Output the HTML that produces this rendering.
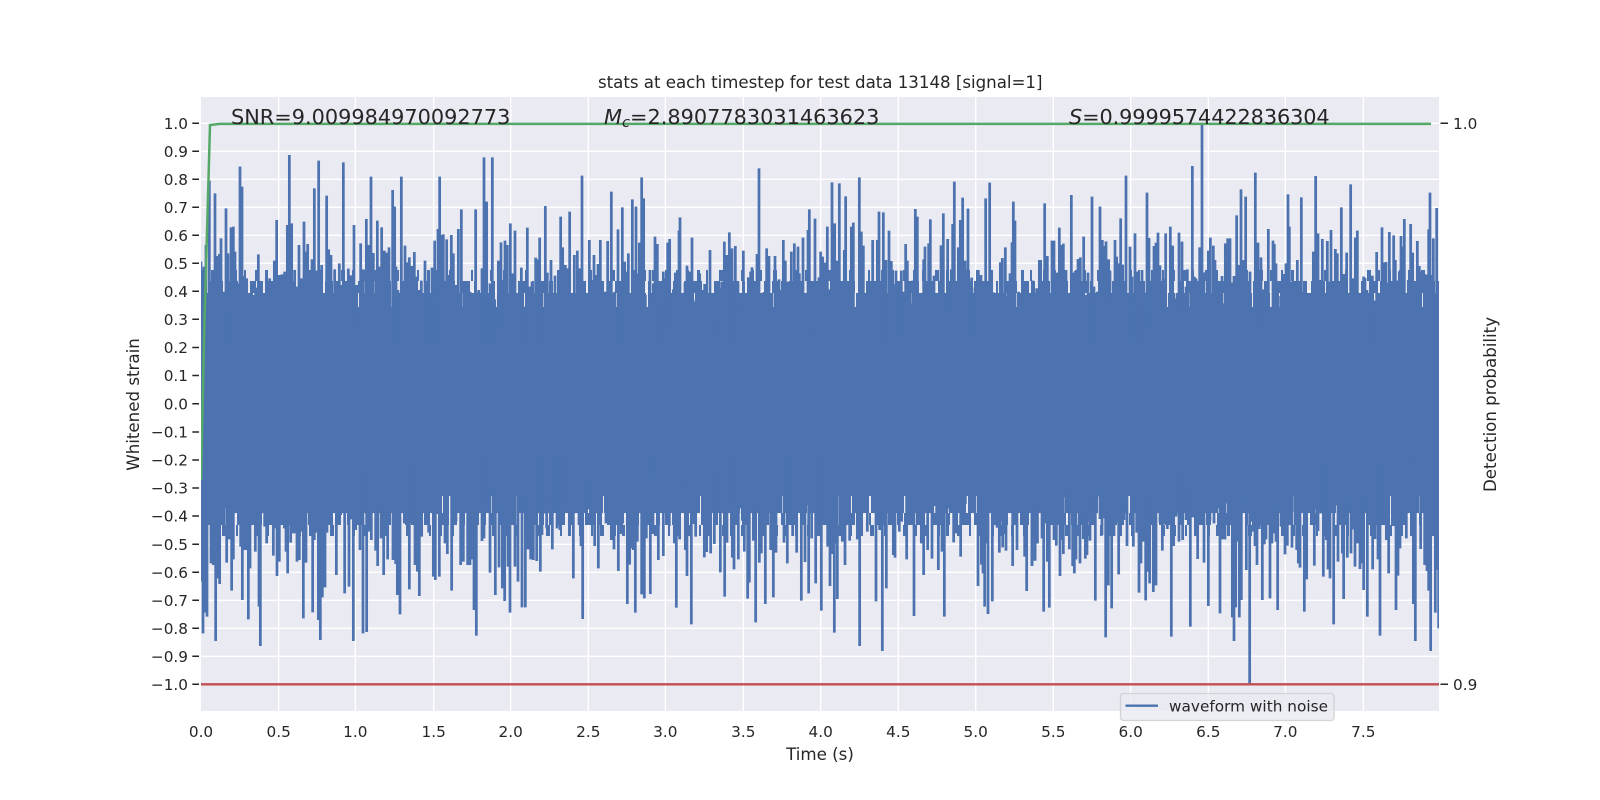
<!DOCTYPE html>
<html><head><meta charset="utf-8"><title>stats at each timestep</title>
<style>html,body{margin:0;padding:0;background:#fff}svg{display:block}text{font-family:"DejaVu Sans","Liberation Sans",sans-serif;fill:#262626}</style></head>
<body>
<svg width="1600" height="800" viewBox="0 0 1600 800" xmlns="http://www.w3.org/2000/svg">
<defs><clipPath id="ax"><rect x="201" y="97" width="1238" height="614"/></clipPath></defs>
<rect x="201" y="97" width="1238" height="614" fill="#eaeaf2"/>
<g stroke="#fff" stroke-width="1.4" fill="none">
<path d="M278.7 97V711M355.3 97V711M433.7 97V711M510.7 97V711M588.3 97V711M665.3 97V711M743.3 97V711M820.7 97V711M898.3 97V711M975.7 97V711M1053.3 97V711M1130.7 97V711M1208.3 97V711M1285.3 97V711M1363.3 97V711"/>
<path d="M201 123.3H1439M201 151.3H1439M201 179.3H1439M201 207.3H1439M201 235.3H1439M201 263.3H1439M201 291.3H1439M201 319.3H1439M201 347.5H1439M201 375.5H1439M201 403.8H1439M201 432H1439M201 460H1439M201 488H1439M201 516H1439M201 544.3H1439M201 572.3H1439M201 600.3H1439M201 628.3H1439M201 656.3H1439M201 684.3H1439"/>
</g>
<g clip-path="url(#ax)">
<rect x="201" y="307" width="1238" height="189" fill="#4c72b0"/>
<g fill="none" stroke="#4c72b0">
<path d="M201 300H1439" stroke-width="14" stroke-dasharray="11 1 17 2 7 1 13 2 23 1 8 2 15 1"/>
<path d="M201 287H1439" stroke-width="12" stroke-dasharray="4 4 8 3 3 5 10 4 2 6 6 3"/>
<path d="M201 275.5H1439" stroke-width="11" stroke-dasharray="2 8 3 6 2 11 4 7 2 9"/>
<path d="M201 504H1439" stroke-width="18" stroke-dasharray="14 1 9 2 21 1 6 2 12 1 17 2 8 1"/>
<path d="M201 519H1439" stroke-width="12" stroke-dasharray="3 4 9 3 5 6 2 4 10 3 4 5"/>
<path d="M201 530.5H1439" stroke-width="11" stroke-dasharray="3 9 2 7 4 10 2 6 3 8"/>
</g>
<g fill="none" stroke="#4c72b0" stroke-width="8.2">
<path transform="translate(200 130) scale(.33333)" d="M3 395V640M12 410V640M18 345V640M28 152V640M38 445V640M45 190V640M52 378V640M58 372V640M63 325V640M70 485V640M78 235V640M84 370V640M93 292V640M100 290V640M105 365V640M112 460V640M120 110V640M126 170V640M132 438V640M140 445V640M147 495V640M155 535V640M160 495V640M167 473V640M175 373V640M185 502V640M192 560V640M199 442V640M209 445V640M216 532V640M223 392V640M230 270V640M238 435V640M246 433V640M254 425V640M262 285V640M268 75V640M275 280V640M284 420V640M292 470V640M297 345V640M304 445V640M312 275V640M316 365V640M323 342V640M330 455V640M336 388V640M343 175V640M350 422V640M356 92V640M365 405V640M372 520V640M380 197V640M386 358V640M393 375V640M397 508V640M404 418V640M410 575V640M418 400V640M425 465V640M430 97V640M437 465V640M445 416V640M452 436V640M462 285V640M470 465V640M477 590V640M482 340V640M490 418V640M499 267V640M507 345V640M513 140V640M520 369V640M532 272V640M538 410V640M545 292V640M553 362V640M560 368V640M567 352V640M574 595V640M578 180V640M584 230V640M588 410V640M594 480V640M604 140V640M610 455V640M615 347V640M620 397V640M628 382V640M636 408V640M643 366V640M650 440V640M656 480V640M664 452V640M675 392V640M685 445V640M692 550V640M696 413V640M704 332V640M714 297V640M719 140V640M724 315V640M730 313V640M740 328V640M746 435V640M754 315V640M760 370V640M768 465V640M775 297V640M784 238V640M790 555V640M798 455V640M805 595V640M810 485V640M818 502V640M827 238V640M836 480V640M846 415V640M852 82V640M860 215V640M870 460V640M877 82V640M884 508V640M888 590V640M895 392V640M903 337V640M908 450V640M915 332V640M922 345V640M931 280V640M938 430V640M945 302V640M953 512V640M957 490V640M964 413V640M972 530V640M982 293V640M990 470V640M996 455V640M1000 490V640M1007 383V640M1014 388V640M1019 323V640M1026 465V640M1036 228V640M1042 428V640M1048 570V640M1053 390V640M1060 610V640M1065 437V640M1072 523V640M1082 260V640M1088 352V640M1096 405V640M1102 415V640M1109 245V640M1116 545V640M1123 375V640M1132 362V640M1140 415V640M1146 137V640M1152 610V640M1162 587V640M1168 330V640M1175 450V640M1182 375V640M1188 435V640M1194 402V640M1201 330V640M1209 500V640M1216 485V640M1223 333V640M1228 485V640M1234 185V640M1244 485V640M1254 298V640"/>
<path transform="translate(620 130) scale(.33333)" d="M7 232V640M14 395V640M18 425V640M25 370V640M30 515V640M37 208V640M42 445V640M48 230V640M53 430V640M58 338V640M65 142V640M71 205V640M76 495V640M80 590V640M84 610V640M90 420V640M96 530V640M100 460V640M105 320V640M112 342V640M120 508V640M130 425V640M137 445V640M143 338V640M149 327V640M155 610V640M160 478V640M166 428V640M172 460V640M177 302V640M180 262V640M188 610V640M195 458V640M201 407V640M208 425V640M216 323V640M223 515V640M228 508V640M235 442V640M239 430V640M246 480V640M254 462V640M262 492V640M270 360V640M276 555V640M281 625V640M286 470V640M294 625V640M300 475V640M305 455V640M313 335V640M320 375V640M328 307V640M336 355V640M346 348V640M354 455V640M360 510V640M365 558V640M370 362V640M377 582V640M385 442V640M392 425V640M396 412V640M403 485V640M408 625V640M411 372V640M417 115V640M424 502V640M432 486V640M440 355V640M447 378V640M455 500V640M465 378V640M472 478V640M477 448V640M483 480V640M490 330V640M496 392V640M501 455V640M507 455V640M514 365V640M523 340V640M528 478V640M534 350V640M538 430V640M544 475V640M549 323V640M556 505V640M564 300V640M568 238V640M576 582V640M585 266V640M590 562V640M597 442V640M602 365V640M608 380V640M614 398V640M622 290V640M630 478V640M636 157V640M644 280V640M650 392V640M658 160V640M663 540V640M668 527V640M673 360V640M677 199V640M682 460V640M689 520V640M694 290V640M700 278V640M707 610V640M712 527V640M718 142V640M724 305V640M730 347V640M736 572V640M740 493V640M746 552V640M752 620V640M758 330V640M765 462V640M772 330V640M777 245V640M784 495V640M790 247V640M798 390V640M807 302V640M814 393V640M820 462V640M824 600V640M828 422V640M834 502V640M838 620V640M844 422V640M850 485V640M857 342V640M862 392V640M868 482V640M872 520V640M878 452V640M886 237V640M892 260V640M898 605V640M904 557V640M911 388V640M915 350V640M921 517V640M926 340V640M931 268V640M938 582V640M942 437V640M948 615V640M953 553V640M958 490V640M963 346V640M970 250V640M977 525V640M983 327V640M990 552V640M994 418V640M998 282V640M1003 155V640M1010 480V640M1015 352V640M1021 270V640M1028 203V640M1035 392V640M1040 420V640M1044 236V640M1050 520V640M1055 443V640M1060 615V640M1065 472V640M1070 488V640M1075 420V640M1083 435V640M1090 485V640M1097 205V640M1102 535V640M1109 158V640M1115 435V640M1121 487V640M1128 513V640M1134 520V640M1141 397V640M1147 384V640M1156 352V640M1163 498V640M1170 430V640M1176 337V640M1180 215V640M1185 272V640M1190 550V640M1196 485V640M1202 502V640M1210 465V640M1216 540V640M1223 466V640M1230 510V640M1238 452V640M1245 488V640M1252 475V640M1258 390V640"/>
<path transform="translate(1030 130) scale(.33333)" d="M3 535V640M7 452V640M14 488V640M20 475V640M26 555V640M32 390V640M37 625V640M44 220V640M52 378V640M58 600V640M66 332V640M72 332V640M76 455V640M82 428V640M88 293V640M95 345V640M100 341V640M108 420V640M115 490V640M124 195V640M130 428V640M136 423V640M144 387V640M151 382V640M156 516V640M161 320V640M167 495V640M174 428V640M180 507V640M186 200V640M192 470V640M202 485V640M210 230V640M217 330V640M223 348V640M228 334V640M236 388V640M240 422V640M245 530V640M250 460V640M255 330V640M260 380V640M266 400V640M272 265V640M278 404V640M284 518V640M288 137V640M294 498V640M300 350V640M306 440V640M315 310V640M320 425V640M326 513V640M336 420V640M344 488V640M351 188V640M357 324V640M361 590V640M366 452V640M372 348V640M378 338V640M384 308V640M390 406V640M396 485V640M400 447V640M407 310V640M413 545V640M421 290V640M428 347V640M436 505V640M441 490V640M447 308V640M452 548V640M456 335V640M462 625V640M468 470V640M472 418V640M478 570V640M482 462V640M487 108V640M493 440V640M498 445V640M503 535V640M509 352V640M516 -20V640M522 427V640M529 625V640M535 362V640M541 323V640M550 347V640M555 390V640M562 495V640M568 490V640M576 438V640M580 520V640M586 340V640M593 325V640M600 325V640M606 457V640M612 438V640M620 256V640M626 405V640M633 178V640M640 390V640M647 200V640M654 537V640M660 425V640M668 552V640M676 128V640M684 338V640M693 382V640M698 478V640M704 488V640M710 548V640M715 297V640M722 590V640M729 332V640M733 342V640M738 400V640M745 498V640M750 625V640M757 435V640M762 432V640M768 400V640M774 193V640M778 290V640M784 455V640M790 453V640M795 488V640M802 390V640M807 555V640M814 202V640M821 485V640M828 618V640M836 558V640M843 570V640M850 365V640M857 138V640M864 310V640M870 450V640M877 327V640M884 580V640M892 333V640M897 455V640M903 300V640M908 458V640M916 357V640M922 370V640M928 510V640M934 232V640M942 432V640M950 368V640M955 495V640M962 163V640M968 445V640M976 323V640M982 302V640M988 490V640M993 525V640M1001 440V640M1005 444V640M1011 480V640M1020 502V640M1027 437V640M1034 512V640M1040 366V640M1048 542V640M1056 292V640M1062 398V640M1068 396V640M1072 458V640M1078 306V640M1084 516V640M1091 316V640M1096 390V640M1100 452V640M1108 424V640M1113 318V640M1118 350V640M1123 267V640M1130 543V640M1135 450V640M1142 282V640M1148 368V640M1155 508V640M1162 333V640M1168 408V640M1172 425V640M1176 580V640M1183 432V640M1190 434V640M1196 298V640M1200 188V640M1204 435V640M1210 325V640M1220 234V640"/>
<path transform="translate(200 460) scale(.33333)" d="M5-9V365M9-9V520M15-9V458M21-9V470M27-9V105M33-9V310M40-9V315M47-9V543M53-9V355M59-9V372M66-9V180M74-9V145M80-9V308M87-9V238M95-9V392M100-9V298M108-9V125M115-9V65M122-9V260M127-9V420M133-9V270M138-9V270M145-9V478M150-9V325M157-9V175M166-9V275M173-9V212M177-9V440M181-9V558M187-9V137M194-9V200M200-9V250M207-9V192M213-9V68M220-9V287M226-9V205M231-9V348M238-9V305M246-9V138M253-9V205M258-9V275M263-9V340M272-9V248M279-9V220M284-9V220M291-9V305M298-9V300M303-9V215M310-9V475M318-9V308M325-9V125M330-9V190M338-9V457M343-9V240M350-9V218M355-9V480M361-9V540M367-9V412M375-9V382M381-9V218M386-9V160M392-9V133M400-9V72M409-9V345M416-9V105M422-9V165M427-9V135M434-9V400M440-9V55M447-9V380M453-9V178M460-9V543M467-9V210M474-9V12M480-9V270M489-9V520M495-9V27M500-9V516M507-9V215M514-9V240M522-9V150M527-9V272M533-9V318M540-9V128M543-9V235M551-9V345M557-9V170M563-9V298M568-9V180M573-9V105M579-9V300M587-9V312M592-9V405M600-9V463M607-9V70M613-9V190M620-9V195M628-9V388M636-9V190M645-9V315M652-9V335M658-9V408M665-9V230M671-9V12M678-9V192M686-9V218M694-9V108M700-9V350M706-9V360M712-9V162M718-9V350M727-9V0M735-9V250M742-9V282M748-9V0M755-9V392M760-9V90M768-9V185M775-9V122M782-9V315M790-9V305M797-9V97M803-9V315M810-9V315M817-9V298M822-9V450M829-9V527M838-9V118M846-9V243M852-9V235M862-9V130M870-9V338M875-9V80M880-9V195M886-9V405M892-9V65M897-9V322M902-9V138M907-9V385M914-9V423M920-9V180M924-9V320M930-9V458M938-9V190M945-9V320M950-9V50M954-9V365M961-9V48M966-9V442M970-9V112M976-9V442M984-9V268M992-9V298M1000-9V300M1003-9V102M1010-9V303M1021-9V335M1026-9V225M1034-9V160M1040-9V205M1047-9V145M1052-9V95M1057-9V268M1065-9V145M1071-9V205M1080-9V210M1087-9V145M1098-9V135M1108-9V218M1115-9V48M1120-9V355M1124-9V50M1132-9V155M1137-9V195M1143-9V258M1148-9V477M1153-9V55M1158-9V148M1165-9V148M1172-9V95M1178-9V165M1184-9V258M1190-9V125M1195-9V325M1201-9V105M1207-9V70M1212-9V100M1218-9V190M1226-9V115M1234-9V240M1242-9V268M1248-9V130M1255-9V333"/>
<path transform="translate(620 460) scale(.33333)" d="M3-9V222M8-9V190M13-9V120M17-9V135M22-9V432M29-9V314M35-9V265M40-9V270M46-9V458M52-9V245M56-9V155M65-9V403M73-9V415M79-9V235M84-9V40M91-9V402M99-9V222M108-9V120M115-9V300M121-9V65M130-9V288M136-9V95M141-9V140M148-9V198M157-9V145M163-9V250M169-9V443M175-9V0M179-9V238M185-9V97M191-9V60M196-9V270M201-9V348M208-9V112M214-9V493M221-9V192M227-9V230M235-9V150M241-9V68M247-9V125M253-9V292M260-9V276M266-9V87M272-9V280M277-9V25M283-9V252M289-9V58M295-9V152M301-9V337M307-9V122M314-9V410M321-9V248M327-9V140M337-9V293M342-9V328M349-9V145M355-9V298M361-9V145M367-9V182M373-9V275M379-9V125M383-9V416M388-9V368M394-9V82M400-9V242M407-9V487M412-9V125M418-9V308M424-9V280M429-9V0M436-9V432M444-9V140M452-9V270M460-9V412M468-9V278M473-9V65M480-9V145M484-9V70M492-9V248M502-9V310M510-9V127M518-9V228M524-9V135M530-9V278M537-9V120M544-9V422M550-9V22M555-9V306M560-9V135M566-9V400M575-9V235M581-9V0M587-9V370M593-9V200M604-9V452M610-9V105M617-9V65M623-9V260M630-9V378M636-9V282M643-9V518M647-9V250M652-9V417M660-9V72M667-9V245M675-9V315M683-9V18M689-9V242M697-9V0M704-9V102M712-9V238M719-9V558M725-9V220M733-9V15M742-9V215M748-9V0M755-9V80M760-9V35M768-9V424M773-9V112M779-9V210M787-9V573M792-9V145M799-9V385M805-9V108M811-9V185M820-9V285M825-9V293M831-9V85M838-9V215M845-9V185M851-9V72M860-9V298M868-9V50M875-9V128M882-9V468M888-9V82M895-9V118M900-9V0M904-9V250M911-9V345M917-9V140M923-9V270M929-9V40M936-9V296M943-9V138M950-9V192M955-9V330M960-9V115M966-9V275M973-9V470M979-9V36M985-9V145M990-9V155M995-9V88M1001-9V247M1008-9V220M1015-9V55M1022-9V290M1028-9V172M1036-9V132M1042-9V70M1052-9V132M1060-9V115M1067-9V17M1074-9V378M1078-9V215M1084-9V314M1089-9V340M1094-9V440M1098-9V250M1104-9V462M1110-9V130M1117-9V424M1124-9V165M1131-9V203M1138-9V278M1143-9V185M1148-9V262M1153-9V222M1158-9V272M1163-9V120M1170-9V135M1178-9V318M1187-9V135M1191-9V270M1198-9V105M1204-9V125M1210-9V68M1214-9V290M1220-9V393M1225-9V28M1229-9V105M1236-9V318M1241-9V140M1245-9V302M1252-9V250M1258-9V135"/>
<path transform="translate(1030 460) scale(.33333)" d="M2-9V105M6-9V318M10-9V140M15-9V302M22-9V250M29-9V132M36-9V235M41-9V455M47-9V190M52-9V305M58-9V443M62-9V178M67-9V180M72-9V240M79-9V257M85-9V182M90-9V348M95-9V240M100-9V282M108-9V112M112-9V85M118-9V268M124-9V160M128-9V318M133-9V340M138-9V298M142-9V45M150-9V310M155-9V160M160-9V237M166-9V296M171-9V285M176-9V185M180-9V242M186-9V165M190-9V97M196-9V422M201-9V110M205-9V78M210-9V177M216-9V226M221-9V175M227-9V532M235-9V376M239-9V195M245-9V445M252-9V228M258-9V187M266-9V343M271-9V145M276-9V180M282-9V180M286-9V115M291-9V258M297-9V82M303-9V108M310-9V260M320-9V218M327-9V398M333-9V310M339-9V245M347-9V421M353-9V335M359-9V370M364-9V112M370-9V396M378-9V376M384-9V130M390-9V187M397-9V272M405-9V193M412-9V207M418-9V97M424-9V530M431-9V258M438-9V170M447-9V245M453-9V33M458-9V240M463-9V82M468-9V180M475-9V175M481-9V500M489-9V172M495-9V163M503-9V297M510-9V165M515-9V45M522-9V308M529-9V50M535-9V438M540-9V182M546-9V142M552-9V190M560-9V100M565-9V145M570-9V460M578-9V238M585-9V238M590-9V130M595-9V217M603-9V135M607-9V472M612-9V543M617-9V442M622-9V245M628-9V472M634-9V420M638-9V142M643-9V115M649-9V330M652-9V130M659-9V672M665-9V185M670-9V215M675-9V258M681-9V315M688-9V207M697-9V420M703-9V253M708-9V238M713-9V175M720-9V415M726-9V250M733-9V220M738-9V245M743-9V450M748-9V138M753-9V200M760-9V170M765-9V283M772-9V257M780-9V145M786-9V263M795-9V155M800-9V270M805-9V310M810-9V323M816-9V95M823-9V455M830-9V358M838-9V108M845-9V170M853-9V317M859-9V148M864-9V213M870-9V160M875-9V0M880-9V350M884-9V165M889-9V240M894-9V328M900-9V355M906-9V90M911-9V493M916-9V136M924-9V305M932-9V145M937-9V280M941-9V417M946-9V115M952-9V293M958-9V75M963-9V280M969-9V208M975-9V320M982-9V250M990-9V327M996-9V310M1001-9V390M1007-9V105M1012-9V470M1018-9V72M1023-9V140M1028-9V328M1035-9V237M1039-9V5M1044-9V298M1050-9V527M1055-9V78M1062-9V105M1069-9V240M1076-9V340M1082-9V78M1090-9V198M1098-9V450M1104-9V347M1110-9V265M1114-9V205M1118-9V185M1124-9V175M1129-9V235M1134-9V90M1140-9V140M1150-9V432M1156-9V543M1165-9V25M1172-9V267M1178-9V148M1184-9V315M1191-9V333M1196-9V392M1202-9V573M1208-9V205M1216-9V458M1222-9V330M1226-9V505"/>
</g>
<path d="M201 684.3H1439" stroke="#c44e52" stroke-width="2.4" fill="none"/>
<path d="M201 480L204 340L210 125L220 123.9H1431" stroke="#55a868" stroke-width="2.5" fill="none"/>
</g>
<g stroke="#262626" stroke-width="1.5" fill="none">
<path d="M192.3 123.3H199M192.3 151.3H199M192.3 179.3H199M192.3 207.3H199M192.3 235.3H199M192.3 263.3H199M192.3 291.3H199M192.3 319.3H199M192.3 347.5H199M192.3 375.5H199M192.3 403.8H199M192.3 432H199M192.3 460H199M192.3 488H199M192.3 516H199M192.3 544.3H199M192.3 572.3H199M192.3 600.3H199M192.3 628.3H199M192.3 656.3H199M192.3 684.3H199"/>
<path d="M1440.5 123.3H1448M1440.5 684.3H1448"/>
</g>
<g font-size="15.28" text-anchor="end">
<text x="188" y="129">1.0</text><text x="188" y="157">0.9</text><text x="188" y="185">0.8</text><text x="188" y="213">0.7</text><text x="188" y="241">0.6</text><text x="188" y="269">0.5</text><text x="188" y="297">0.4</text><text x="188" y="325">0.3</text><text x="188" y="353">0.2</text><text x="188" y="381">0.1</text><text x="188" y="409.5">0.0</text><text x="188" y="437.5">−0.1</text><text x="188" y="465.5">−0.2</text><text x="188" y="493.5">−0.3</text><text x="188" y="521.5">−0.4</text><text x="188" y="550">−0.5</text><text x="188" y="578">−0.6</text><text x="188" y="606">−0.7</text><text x="188" y="634">−0.8</text><text x="188" y="662">−0.9</text><text x="188" y="690">−1.0</text>
</g>
<g font-size="15.28" text-anchor="middle">
<text x="201" y="737">0.0</text><text x="278.7" y="737">0.5</text><text x="355.3" y="737">1.0</text><text x="433.7" y="737">1.5</text><text x="510.7" y="737">2.0</text><text x="588.3" y="737">2.5</text><text x="665.3" y="737">3.0</text><text x="743.3" y="737">3.5</text><text x="820.7" y="737">4.0</text><text x="898.3" y="737">4.5</text><text x="975.7" y="737">5.0</text><text x="1053.3" y="737">5.5</text><text x="1130.7" y="737">6.0</text><text x="1208.3" y="737">6.5</text><text x="1285.3" y="737">7.0</text><text x="1363.3" y="737">7.5</text>
</g>
<text x="1453" y="129" font-size="15.28">1.0</text>
<text x="1453" y="690" font-size="15.28">0.9</text>
<text x="598" y="88" font-size="16.67" textLength="444.5">stats at each timestep for test data 13148 [signal=1]</text>
<text x="820" y="760" font-size="16.67" text-anchor="middle">Time (s)</text>
<text transform="translate(139 404.5) rotate(-90)" font-size="16.67" text-anchor="middle">Whitened strain</text>
<text transform="translate(1496 404.5) rotate(-90)" font-size="16.67" text-anchor="middle">Detection probability</text>
<text x="231" y="124" font-size="20.83">SNR=9.009984970092773</text>
<text x="604" y="124" font-size="20.83"><tspan font-style="italic">M</tspan><tspan font-style="italic" font-size="14.6" dy="3">c</tspan><tspan dy="-3">=2.8907783031463623</tspan></text>
<text x="1069" y="124" font-size="20.83" letter-spacing="-0.1"><tspan font-style="italic">S</tspan>=0.9999574422836304</text>
<rect x="1120.5" y="693.5" width="213.5" height="27" rx="3" ry="3" fill="#eaeaf2" fill-opacity=".8" stroke="#cccccc" stroke-opacity=".8" stroke-width="1.3"/>
<path d="M1125.5 705.7H1158" stroke="#4c72b0" stroke-width="2.4" fill="none"/>
<text x="1169" y="711.5" font-size="15.28" textLength="159">waveform with noise</text>
</svg>
</body></html>
